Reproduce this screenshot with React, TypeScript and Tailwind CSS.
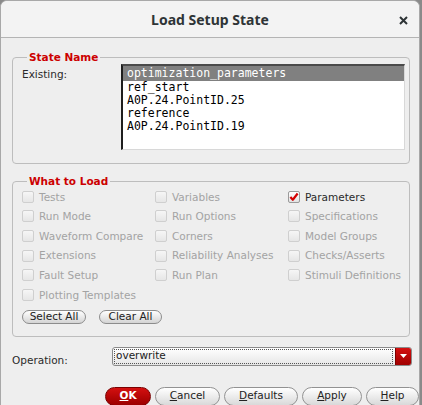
import React from "react";

const body = { fontFamily: '"DejaVu Sans", Verdana, sans-serif' };
const mono = { fontFamily: '"DejaVu Sans Mono", monospace' };

function Check({ label, checked = false }: { label: string; checked?: boolean }) {
  return (
    <div className="flex h-[19.6px] items-center">
      <div
        className={
          "flex h-[12px] w-[12px] items-center justify-center rounded-[2px] border " +
          (checked
            ? "border-[#9a9a9a] bg-gradient-to-b from-white to-[#e2e2e2]"
            : "border-[#cfcfcf] bg-gradient-to-b from-[#f6f6f6] to-[#e6e6e6]")
        }
      >
        {checked && (
          <svg width="11" height="10" viewBox="0 0 11 10">
            <path d="M1.5 5 L4.2 8 L9.5 1.2" stroke="#d40000" strokeWidth="2.4" fill="none" strokeLinejoin="round" />
          </svg>
        )}
      </div>
      <span className={"ml-[5px] text-[10.5px] leading-none " + (checked ? "text-[#2a2a2a]" : "text-[#a3a3a3]")}>{label}</span>
    </div>
  );
}

function Btn({ w, children, primary = false }: { w: string; children: React.ReactNode; primary?: boolean }) {
  return (
    <div
      className={
        "flex h-[19px] items-center justify-center rounded-full border text-[10.5px] " +
        w +
        (primary
          ? " border-[#7a0000] bg-gradient-to-b from-[#d41010] to-[#9c0000] font-bold text-white"
          : " border-[#929292] bg-gradient-to-b from-white to-[#d9d9d9] text-[#222]")
      }
    >
      {children}
    </div>
  );
}

export default function App() {
  const cols = [
    ["Tests", "Run Mode", "Waveform Compare", "Extensions", "Fault Setup", "Plotting Templates"],
    ["Variables", "Run Options", "Corners", "Reliability Analyses", "Run Plan"],
    ["Parameters", "Specifications", "Model Groups", "Checks/Asserts", "Stimuli Definitions"],
  ];
  return (
    <div className="h-[405px] w-[422px] overflow-hidden bg-[#8a8a8a]" style={body}>
      <div className="h-[405px] w-[420px] overflow-hidden rounded-t-[7px] border-x border-t border-[#a8a8a8] bg-[#eeeeee]">
        <div className="relative flex h-[37px] items-center justify-center border-b border-[#b4b4b4] bg-[#f3f3f3]">
          <span className="text-[14px] font-bold text-[#2e3436]" style={{ fontFamily: '"Noto Sans", sans-serif' }}>
            Load Setup State
          </span>
          <svg className="absolute right-[11px] top-[15px]" width="9" height="9" viewBox="0 0 9 9">
            <path d="M1 1 L8 8 M8 1 L1 8" stroke="#2e3436" strokeWidth="2" />
          </svg>
        </div>

        <div className="pl-[11px]">
          <fieldset className="mt-[13px] w-[398px] rounded-[4px] border border-[#bdbdbd] pb-[13px] pl-[9px]">
            <legend className="ml-[5px] px-[2px] text-[10.5px] font-bold leading-[12px] text-[#cc0000]">State Name</legend>
            <div className="mt-[1px] flex">
              <div className="w-[99px] pt-[3px] text-[10.5px] text-[#2a2a2a]">Existing:</div>
              <div
                className="h-[86px] w-[284px] border-l-2 border-t-2 border-r border-b border-l-[#1e1e1e] border-t-[#4a4a4a] border-r-[#d8d8d8] border-b-[#d8d8d8] bg-white text-[11.5px] text-black"
                style={mono}
              >
                <div className="h-[15px] bg-[#808080] pl-[4px] leading-[14px] text-white">optimization_parameters</div>
                <div className="h-[13px] pl-[4px] leading-[12px]">ref_start</div>
                <div className="h-[13px] pl-[4px] leading-[12px]">A0P.24.PointID.25</div>
                <div className="h-[13px] pl-[4px] leading-[12px]">reference</div>
                <div className="h-[13px] pl-[4px] leading-[12px]">A0P.24.PointID.19</div>
              </div>
            </div>
          </fieldset>

          <fieldset className="mt-[11px] w-[398px] rounded-[4px] border border-[#bdbdbd] pb-[12px] pl-[9px]">
            <legend className="ml-[5px] px-[2px] text-[10.5px] font-bold leading-[12px] text-[#cc0000]">What to Load</legend>
            <div className="grid grid-cols-[133px_133px_120px]">
              {cols.map((c, i) => (
                <div key={i} className="flex flex-col">
                  {c.map((l) => (
                    <Check key={l} label={l} checked={l === "Parameters"} />
                  ))}
                </div>
              ))}
            </div>
            <div className="mt-[5px] flex gap-[13px]">
              <div className="flex h-[14px] w-[64px] items-center justify-center rounded-full border border-[#8c8c8c] bg-gradient-to-b from-white to-[#d4d4d4] text-[10.5px] leading-none text-[#222]">
                Select All
              </div>
              <div className="flex h-[14px] w-[63px] items-center justify-center rounded-full border border-[#8c8c8c] bg-gradient-to-b from-white to-[#d4d4d4] text-[10.5px] leading-none text-[#222]">
                Clear All
              </div>
            </div>
          </fieldset>

          <div className="mt-[10px] flex h-[19px] items-start">
            <div className="w-[100px] pt-[7px] text-[10.5px] leading-[12px] text-[#2a2a2a]">Operation:</div>
            <div className="flex h-[19px] w-[300px] items-stretch overflow-hidden rounded-[3px] border border-[#8a8a8a] bg-gradient-to-b from-white to-[#e6e6e6]">
              <div className="my-[1px] ml-[1px] mr-[2px] flex flex-1 items-center border border-dotted border-[#555] pl-[1px] text-[10.5px] text-[#222]">
                overwrite
              </div>
              <div className="flex w-[16px] items-center justify-center border-l border-[#7a0000] bg-gradient-to-b from-[#d41010] to-[#a00000]">
                <svg width="7" height="4" viewBox="0 0 7 4">
                  <path d="M0 0 L7 0 L3.5 4 Z" fill="white" />
                </svg>
              </div>
            </div>
          </div>

          <div className="mt-[21px] flex gap-[4px] pl-[93px]">
            <Btn w="w-[46px]" primary>
              <span className="underline">O</span>K
            </Btn>
            <Btn w="w-[65px]">
              <span className="underline">C</span>ancel
            </Btn>
            <Btn w="w-[74px]">
              <span className="underline">D</span>efaults
            </Btn>
            <Btn w="w-[60px]">
              <span className="underline">A</span>pply
            </Btn>
            <Btn w="w-[53px]">
              <span className="underline">H</span>elp
            </Btn>
          </div>
        </div>
      </div>
    </div>
  );
}
